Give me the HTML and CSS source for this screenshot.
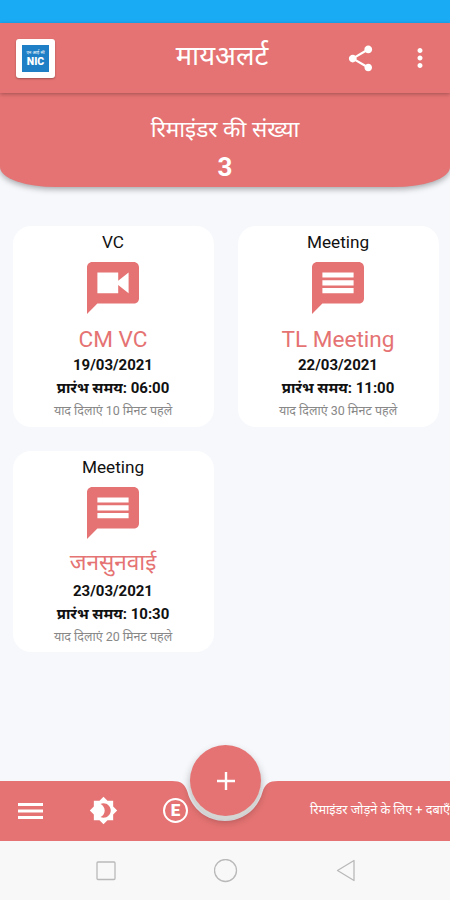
FILE: index.html
```
<!DOCTYPE html>
<html lang="hi">
  <head>
    <title>मायअलर्ट</title>
    <meta charset="UTF-8">
    <meta name="viewport" content="width=device-width, initial-scale=1.0">
    <link rel="stylesheet" href="styles.css">
  </head>
  <body>
    <div class="status"></div>

    <header class="appbar">
      <div class="logo">
        <div class="nic">
          <small>एन आई सी</small>
          <b>NIC</b>
        </div>
      </div>
      <h1>मायअलर्ट</h1>
      <svg class="share" viewBox="0 0 24 24"><path d="M18 16.08c-.76 0-1.44.3-1.96.77L8.91 12.7c.05-.23.09-.46.09-.7s-.04-.47-.09-.7l7.05-4.11c.54.5 1.25.81 2.04.81 1.66 0 3-1.34 3-3s-1.34-3-3-3-3 1.34-3 3c0 .24.04.47.09.7L8.04 9.81C7.5 9.31 6.79 9 6 9c-1.66 0-3 1.34-3 3s1.34 3 3 3c.79 0 1.5-.31 2.04-.81l7.12 4.16c-.05.21-.08.43-.08.65 0 1.61 1.31 2.92 2.92 2.92s2.92-1.31 2.92-2.92-1.31-2.92-2.92-2.92z"/></svg>
      <svg class="more" viewBox="0 0 24 24"><path d="M12 8c1.1 0 2-.9 2-2s-.9-2-2-2-2 .9-2 2 .9 2 2 2zm0 2c-1.1 0-2 .9-2 2s.9 2 2 2 2-.9 2-2-.9-2-2-2zm0 6c-1.1 0-2 .9-2 2s.9 2 2 2 2-.9 2-2-.9-2-2-2z"/></svg>
    </header>

    <section class="summary">
      <span class="caption">रिमाइंडर की संख्या</span>
      <span class="count">3</span>
    </section>

    <main class="cards">
      <div class="card">
        <span class="type">VC</span>
        <svg class="bubble" viewBox="2 2 20 20"><path d="M20 2H4c-1.1 0-2 .9-2 2v18l4-4h14c1.1 0 2-.9 2-2V4c0-1.1-.9-2-2-2zm-2 12l-4-3.2V14H6V6h8v3.2L18 6v8z"/></svg>
        <span class="title">CM VC</span>
        <span class="date">19/03/2021</span>
        <span class="time">प्रारंभ समय: 06:00</span>
        <span class="remind">याद दिलाएं 10 मिनट पहले</span>
      </div>
      <div class="card">
        <span class="type">Meeting</span>
        <svg class="bubble" viewBox="2 2 20 20"><path d="M20 2H4c-1.1 0-2 .9-2 2v18l4-4h14c1.1 0 2-.9 2-2V4c0-1.1-.9-2-2-2zm-2 12H6v-2h12v2zm0-3H6V9h12v2zm0-3H6V6h12v2z"/></svg>
        <span class="title">TL Meeting</span>
        <span class="date">22/03/2021</span>
        <span class="time">प्रारंभ समय: 11:00</span>
        <span class="remind">याद दिलाएं 30 मिनट पहले</span>
      </div>
      <div class="card">
        <span class="type">Meeting</span>
        <svg class="bubble" viewBox="2 2 20 20"><path d="M20 2H4c-1.1 0-2 .9-2 2v18l4-4h14c1.1 0 2-.9 2-2V4c0-1.1-.9-2-2-2zm-2 12H6v-2h12v2zm0-3H6V9h12v2zm0-3H6V6h12v2z"/></svg>
        <span class="title hindi">जनसुनवाई</span>
        <span class="date">23/03/2021</span>
        <span class="time">प्रारंभ समय: 10:30</span>
        <span class="remind">याद दिलाएं 20 मिनट पहले</span>
      </div>
    </main>

    <footer class="bottombar">
      <svg class="shape" viewBox="0 0 450 60"><path d="M0 0H172C181 0 185 3 187.500 11C192 28 207 40 225 40S258 28 262.500 11C265 3 269 0 278 0H450V60H0z"/></svg>
      <div class="tools">
        <svg class="menu" viewBox="0 0 25 16"><path d="M0 0h25v3H0zM0 6.500h25v3H0zM0 13h25v3H0z"/></svg>
        <svg class="theme" viewBox="0 0 24 24"><path d="M20 15.31L23.31 12 20 8.69V4h-4.69L12 .69 8.69 4H4v4.69L.69 12 4 15.31V20h4.69L12 23.31 15.31 20H20v-4.69zM12 18c-.89 0-1.74-.2-2.5-.55C11.56 16.5 13 14.42 13 12s-1.44-4.5-3.5-5.45C10.26 6.2 11.11 6 12 6c3.31 0 6 2.69 6 6s-2.69 6-6 6z"/></svg>
        <span class="lang">E</span>
      </div>
      <p class="hint">रिमाइंडर जोड़ने के लिए + दबाएँ</p>
      <div class="fab">
        <svg viewBox="0 0 18 18"><path d="M7.800 0h2.400v7.800H18v2.400h-7.800V18H7.800v-7.800H0V7.800h7.800z"/></svg>
      </div>
    </footer>

    <nav class="sysnav">
      <svg viewBox="0 0 24 24"><rect x="3" y="3" width="18" height="17.500" rx="1"/></svg>
      <svg viewBox="0 0 24 24"><circle cx="11.500" cy="11.500" r="11"/></svg>
      <svg viewBox="0 0 24 24"><path d="M20 1.500v20L3.500 11.500z"/></svg>
    </nav>
  </body>
</html>
```

FILE: styles.css
```
body {
  margin: 0;
  width: 450px;
  height: 900px;
  display: flex;
  flex-direction: column;
  overflow: hidden;
  background: #f6f8fc;
  font-family: Roboto, "Noto Sans", sans-serif;
}

.status {
  height: 23px;
  background: #1aabf5;
}

.appbar {
  height: 70px;
  display: grid;
  grid-template-columns: 120px 204px 72px 48px;
  align-items: center;
  justify-items: center;
  background: #e57373;
  color: white;
  z-index: 2;
  box-shadow: 0 1px 4px rgba(0, 0, 0, .3);
}

.appbar svg {
  fill: white;
}

.logo {
  justify-self: start;
  margin-left: 16px;
  width: 39px;
  height: 39px;
  display: flex;
  align-items: center;
  justify-content: center;
  background: white;
  border-radius: 3px;
  box-shadow: 0 1px 2px rgba(0, 0, 0, .3);
}

.nic {
  width: 27px;
  height: 27px;
  display: flex;
  flex-direction: column;
  align-items: center;
  justify-content: center;
  background: #1f7fc6;
  white-space: nowrap;
}

.nic small {
  font-size: 4.5px;
  line-height: 7px;
}

.nic b {
  font-size: 10.5px;
  line-height: 12px;
  font-weight: 900;
}

h1 {
  margin: 0 0 4px;
  font-size: 27.4px;
  font-weight: 400;
  line-height: 36px;
  white-space: nowrap;
}

.share {
  width: 31px;
  height: 31px;
}

.more {
  width: 30px;
  height: 30px;
}

.summary {
  height: 94px;
  display: flex;
  flex-direction: column;
  align-items: center;
  background: #e57373;
  color: white;
  border-radius: 0 0 56px 56px / 0 0 20px 20px;
  box-shadow: 0 2px 6px rgba(0, 0, 0, .35);
}

.caption {
  margin-top: 21px;
  font-size: 22.6px;
  line-height: 32px;
}

.count {
  margin-top: 5px;
  font-size: 26px;
  line-height: 32px;
  font-weight: 700;
}

.cards {
  flex: 1;
  display: grid;
  grid-template-columns: 201px 201px;
  grid-auto-rows: 201px;
  gap: 24px;
  padding: 39px 12px 0 12.5px;
}

.card {
  display: flex;
  flex-direction: column;
  align-items: center;
  background: white;
  border-radius: 18px;
  white-space: nowrap;
  color: #111;
}

.type {
  margin-top: 5px;
  font-size: 17.2px;
  line-height: 22px;
}

.bubble {
  width: 52px;
  height: 52px;
  margin-top: 9px;
  fill: #e57373;
}

.title {
  margin-top: 11px;
  height: 29px;
  font-size: 22.6px;
  line-height: 30px;
  color: #e57373;
}

.hindi {
  margin-top: 9px;
  height: 32px;
}

.date {
  font-size: 15px;
  line-height: 22px;
  font-weight: 700;
}

.time {
  font-size: 15px;
  line-height: 24px;
  font-weight: 700;
}

.remind {
  font-size: 12.5px;
  line-height: 22px;
  color: #888;
}

.bottombar {
  position: relative;
  height: 60px;
  display: flex;
  align-items: center;
  justify-content: space-between;
}

.shape {
  position: absolute;
  top: 0;
  left: 0;
  width: 450px;
  height: 60px;
  fill: #e57373;
}

.tools {
  position: relative;
  display: flex;
  align-items: center;
  padding: 0 0 1px 18px;
}

.tools svg {
  fill: white;
}

.menu {
  width: 25px;
  height: 16px;
}

.theme {
  width: 29px;
  height: 29px;
  margin: 0 45px 0 46px;
}

.lang {
  width: 21px;
  height: 21px;
  border: 2px solid white;
  border-radius: 50%;
  color: white;
  font-size: 17px;
  line-height: 21px;
  font-weight: 900;
  text-align: center;
}

.hint {
  position: relative;
  width: 140px;
  margin: 0;
  padding-bottom: 2px;
  white-space: nowrap;
  color: white;
  font-size: 12.7px;
  line-height: 24px;
}

.fab {
  position: absolute;
  left: 190px;
  top: -36px;
  width: 71px;
  height: 71px;
  display: flex;
  align-items: center;
  justify-content: center;
  background: #e57373;
  border-radius: 50%;
  box-shadow: 0 4px 1px #d5d5d3, 0 5px 9px rgba(0, 0, 0, .3);
}

.fab svg {
  width: 18px;
  height: 18px;
  fill: white;
}

.sysnav {
  height: 59px;
  display: flex;
  align-items: center;
  justify-content: center;
  gap: 96px;
  padding-left: 1px;
  background: #f8f8f8;
}

.sysnav svg {
  width: 24px;
  height: 24px;
  fill: none;
  stroke: #b9b9b9;
  stroke-width: 1.3;
  stroke-linejoin: round;
}
```
